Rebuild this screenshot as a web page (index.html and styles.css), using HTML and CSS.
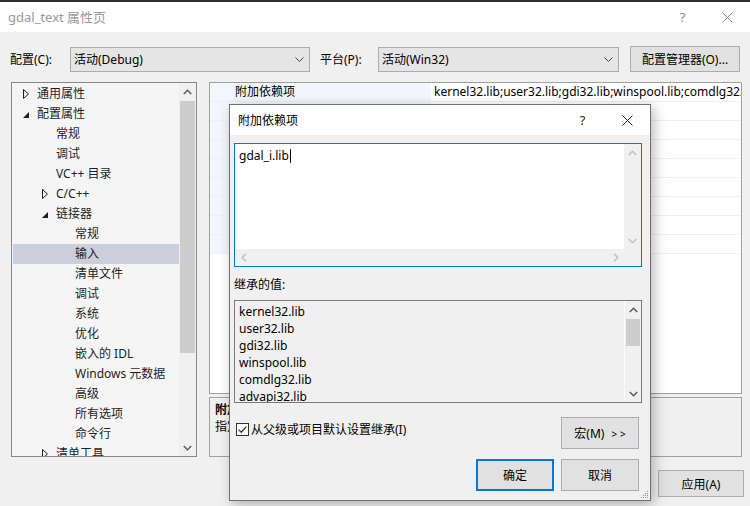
FILE: index.html
```html
<!DOCTYPE html>
<html lang="zh-CN">
<head>
  <meta charset="UTF-8">
  <title>gdal_text 属性页</title>
  <link rel="stylesheet" href="styles.css">
</head>
<body>
  <div class="topstrip"></div>
  <div class="titlebar">
    <span class="title">gdal_text 属性页</span>
    <span class="cap-btn">?</span>
    <span class="cap-btn"><svg width="11" height="11" viewBox="0 0 11 11"><path d="M0.5 0.5 L10.5 10.5 M10.5 0.5 L0.5 10.5" stroke="#8a8a8a" stroke-width="1"/></svg></span>
  </div>

  <div class="toolbar">
    <span class="tool-label">配置(C):</span>
    <div class="combo combo-config"><span>活动(Debug)</span><svg width="9" height="5" viewBox="0 0 9 5"><path d="M0.5 0.5 L4.5 4.5 L8.5 0.5" fill="none" stroke="#444"/></svg></div>
    <span class="tool-label label-platform">平台(P):</span>
    <div class="combo combo-platform"><span>活动(Win32)</span><svg width="9" height="5" viewBox="0 0 9 5"><path d="M0.5 0.5 L4.5 4.5 L8.5 0.5" fill="none" stroke="#444"/></svg></div>
    <button class="btn btn-manager">配置管理器(O)...</button>
  </div>

  <div class="main">
    <div class="tree">
      <div class="tree-list">
        <div class="node lv0"><span class="arrow"><svg width="6" height="10" viewBox="0 0 6 10"><path d="M0.5 0.5 L5.5 5 L0.5 9.5 Z" fill="none" stroke="#1e1e1e"/></svg></span>通用属性</div>
        <div class="node lv0"><span class="arrow"><svg width="6" height="10" viewBox="0 0 6 10"><path d="M6 3 L6 9 L0 9 Z" fill="#1e1e1e"/></svg></span>配置属性</div>
        <div class="node lv1"><span class="arrow"></span>常规</div>
        <div class="node lv1"><span class="arrow"></span>调试</div>
        <div class="node lv1"><span class="arrow"></span>VC++ 目录</div>
        <div class="node lv1"><span class="arrow"><svg width="6" height="10" viewBox="0 0 6 10"><path d="M0.5 0.5 L5.5 5 L0.5 9.5 Z" fill="none" stroke="#1e1e1e"/></svg></span>C/C++</div>
        <div class="node lv1"><span class="arrow"><svg width="6" height="10" viewBox="0 0 6 10"><path d="M6 3 L6 9 L0 9 Z" fill="#1e1e1e"/></svg></span>链接器</div>
        <div class="node lv2"><span class="arrow"></span>常规</div>
        <div class="node lv2 selected"><span class="arrow"></span>输入</div>
        <div class="node lv2"><span class="arrow"></span>清单文件</div>
        <div class="node lv2"><span class="arrow"></span>调试</div>
        <div class="node lv2"><span class="arrow"></span>系统</div>
        <div class="node lv2"><span class="arrow"></span>优化</div>
        <div class="node lv2"><span class="arrow"></span>嵌入的 IDL</div>
        <div class="node lv2"><span class="arrow"></span>Windows 元数据</div>
        <div class="node lv2"><span class="arrow"></span>高级</div>
        <div class="node lv2"><span class="arrow"></span>所有选项</div>
        <div class="node lv2"><span class="arrow"></span>命令行</div>
        <div class="node lv1"><span class="arrow"><svg width="6" height="10" viewBox="0 0 6 10"><path d="M0.5 0.5 L5.5 5 L0.5 9.5 Z" fill="none" stroke="#1e1e1e"/></svg></span>清单工具</div>
      </div>
      <div class="vscroll">
        <div class="sb-arrow"><svg width="9" height="6" viewBox="0 0 9 6"><path d="M0.8 5 L4.5 1.3 L8.2 5" fill="none" stroke="#606060" stroke-width="1.6"/></svg></div>
        <div class="sb-thumb tree-thumb"></div>
        <div class="sb-fill"></div>
        <div class="sb-arrow"><svg width="9" height="6" viewBox="0 0 9 6"><path d="M0.8 1 L4.5 4.7 L8.2 1" fill="none" stroke="#606060" stroke-width="1.6"/></svg></div>
      </div>
    </div>

    <div class="props">
      <div class="grid">
        <div class="row"><div class="name">附加依赖项</div><div class="value">kernel32.lib;user32.lib;gdi32.lib;winspool.lib;comdlg32.lib;advapi32.lib;shell32.lib;ole32.lib</div></div>
        <div class="row"><div class="name">忽略所有默认库</div><div class="value"></div></div>
        <div class="row"><div class="name">忽略特定默认库</div><div class="value"></div></div>
        <div class="row"><div class="name">模块定义文件</div><div class="value"></div></div>
        <div class="row"><div class="name">将模块添加到程序集</div><div class="value"></div></div>
        <div class="row"><div class="name">嵌入托管资源文件</div><div class="value"></div></div>
        <div class="row"><div class="name">强制符号引用</div><div class="value"></div></div>
        <div class="row"><div class="name">延迟加载的 DLL</div><div class="value"></div></div>
        <div class="row"><div class="name">程序集链接资源</div><div class="value"></div></div>
      </div>
      <div class="desc">
        <div class="desc-title">附加依赖项</div>
        <div class="desc-text">指定要添加到链接命令行的附加项。[例如 kernel32.lib]</div>
      </div>
    </div>
  </div>

  <div class="footer">
    <button class="btn btn-apply">应用(A)</button>
  </div>

  <div class="dialog">
    <div class="dlg-title">
      <span class="title dlg-name">附加依赖项</span>
      <span class="cap-btn dlg-cap">?</span>
      <span class="cap-btn dlg-cap"><svg width="11" height="11" viewBox="0 0 11 11"><path d="M0.5 0.5 L10.5 10.5 M10.5 0.5 L0.5 10.5" stroke="#222" stroke-width="1"/></svg></span>
    </div>
    <div class="dlg-body">
      <div class="edit">
        <div class="edit-text">gdal_i.lib<span class="caret"></span></div>
        <div class="vscroll edit-v">
          <div class="sb-arrow"><svg width="9" height="6" viewBox="0 0 9 6"><path d="M0.8 5 L4.5 1.3 L8.2 5" fill="none" stroke="#c2c2c2" stroke-width="1.6"/></svg></div>
          <div class="sb-fill"></div>
          <div class="sb-arrow"><svg width="9" height="6" viewBox="0 0 9 6"><path d="M0.8 1 L4.5 4.7 L8.2 1" fill="none" stroke="#c2c2c2" stroke-width="1.6"/></svg></div>
        </div>
        <div class="hscroll">
          <div class="sb-arrow-h"><svg width="6" height="9" viewBox="0 0 6 9"><path d="M5 0.8 L1.3 4.5 L5 8.2" fill="none" stroke="#c2c2c2" stroke-width="1.6"/></svg></div>
          <div class="sb-fill"></div>
          <div class="sb-arrow-h"><svg width="6" height="9" viewBox="0 0 6 9"><path d="M1 0.8 L4.7 4.5 L1 8.2" fill="none" stroke="#c2c2c2" stroke-width="1.6"/></svg></div>
        </div>
        <div class="corner"></div>
      </div>

      <div class="inherit-label">继承的值:</div>
      <div class="inherit">
        <div class="inherit-list">
          <div>kernel32.lib</div>
          <div>user32.lib</div>
          <div>gdi32.lib</div>
          <div>winspool.lib</div>
          <div>comdlg32.lib</div>
          <div>advapi32.lib</div>
          <div>shell32.lib</div>
        </div>
        <div class="vscroll inherit-v">
          <div class="sb-arrow"><svg width="9" height="6" viewBox="0 0 9 6"><path d="M0.8 5 L4.5 1.3 L8.2 5" fill="none" stroke="#606060" stroke-width="1.6"/></svg></div>
          <div class="sb-thumb list-thumb"></div>
          <div class="sb-fill"></div>
          <div class="sb-arrow"><svg width="9" height="6" viewBox="0 0 9 6"><path d="M0.8 1 L4.5 4.7 L8.2 1" fill="none" stroke="#606060" stroke-width="1.6"/></svg></div>
        </div>
      </div>

      <div class="dlg-row">
        <label class="check">
          <svg width="13" height="13" viewBox="0 0 13 13"><rect x="0.5" y="0.5" width="12" height="12" fill="#fff" stroke="#333"/><path d="M2.6 6.6 L5.2 9.2 L10.4 3.6" fill="none" stroke="#333" stroke-width="1.3"/></svg>
          <span>从父级或项目默认设置继承(I)</span>
        </label>
        <button class="btn dlg-btn">宏(M) <span class="chev">&gt; &gt;</span></button>
      </div>
      <div class="dlg-row dlg-actions">
        <button class="btn dlg-btn btn-default">确定</button>
        <button class="btn dlg-btn">取消</button>
      </div>
    </div>
    <svg class="grip" width="8" height="8" viewBox="0 0 8 8">
      <rect x="6" y="0" width="1" height="1" fill="#999"/>
      <rect x="4" y="2" width="1" height="1" fill="#999"/><rect x="6" y="2" width="1" height="1" fill="#999"/>
      <rect x="2" y="4" width="1" height="1" fill="#999"/><rect x="4" y="4" width="1" height="1" fill="#999"/><rect x="6" y="4" width="1" height="1" fill="#999"/>
      <rect x="0" y="6" width="1" height="1" fill="#999"/><rect x="2" y="6" width="1" height="1" fill="#999"/><rect x="4" y="6" width="1" height="1" fill="#999"/><rect x="6" y="6" width="1" height="1" fill="#999"/>
    </svg>
  </div>
</body>
</html>
```

FILE: styles.css
```css
* {
  box-sizing: border-box;
}
body {
  margin: 0;
  width: 750px;
  height: 506px;
  overflow: hidden;
  position: relative;
  background-color: #f0f0f0;
  color: #000;
  font-family: "Noto Sans", "Noto Sans CJK SC", sans-serif;
  font-size: 12px;
  line-height: 17px;
}
button {
  font-family: inherit;
  font-size: 12px;
  color: #000;
}
svg {
  display: block;
}

.topstrip {
  height: 2px;
  background-color: #2f2f2f;
}
.titlebar {
  height: 30px;
  background-color: #fff;
  display: flex;
  align-items: center;
}
.title {
  flex: 1;
  padding-left: 8px;
  color: #999;
  font-size: 13px;
}
.cap-btn {
  width: 45px;
  height: 30px;
  display: flex;
  align-items: center;
  justify-content: center;
  color: #8a8a8a;
  font-size: 13px;
}

/* toolbar */
.toolbar {
  display: flex;
  align-items: center;
  padding: 14px 0 10px 10px;
}
.tool-label {
  width: 60px;
}
.label-platform {
  width: 58px;
  margin-left: 10px;
}
.combo {
  height: 25px;
  background-color: #e5e5e5;
  border: 1px solid #acacac;
  display: flex;
  align-items: center;
  justify-content: space-between;
  padding: 0 5px 0 3px;
}
.combo-config {
  width: 240px;
}
.combo-platform {
  width: 241px;
}
.btn {
  background-color: #e1e1e1;
  border: 1px solid #adadad;
  padding: 0;
}
.btn-manager {
  width: 110px;
  height: 26px;
  margin-left: 11px;
}

/* main area */
.main {
  display: flex;
  gap: 12px;
  padding-left: 11px;
  height: 375px;
}
.tree {
  width: 186px;
  border: 1px solid #828790;
  background-color: #f5f5f5;
  display: flex;
  overflow: hidden;
}
.tree-list {
  flex: 1;
  padding: 1px 0 0 1px;
  color: #1e1e1e;
  overflow: hidden;
}
.node {
  height: 20px;
  line-height: 20px;
  display: flex;
  align-items: center;
  white-space: nowrap;
}
.node.selected {
  background-color: #cccedb;
}
.lv0 { padding-left: 10px; }
.lv1 { padding-left: 29px; }
.lv2 { padding-left: 48px; }
.arrow {
  width: 14px;
  flex-shrink: 0;
}

.vscroll {
  width: 17px;
  flex-shrink: 0;
  display: flex;
  flex-direction: column;
  background-color: #f0f0f0;
}
.sb-arrow {
  height: 17px;
  display: flex;
  align-items: center;
  justify-content: center;
}
.sb-fill {
  flex: 1;
}
.sb-thumb {
  margin: 1px 1px 0;
  background-color: #cdcdcd;
}
.tree-thumb {
  height: 252px;
}

.props {
  width: 533px;
  display: flex;
  flex-direction: column;
  gap: 3px;
}
.grid {
  height: 313px;
  border: 1px solid #a0a0a0;
  background-color: #fff;
  overflow: hidden;
}
.row {
  height: 19px;
  line-height: 18px;
  display: flex;
  border-bottom: 1px solid #f0f0f3;
  white-space: nowrap;
}
.row .name {
  width: 221px;
  flex-shrink: 0;
  padding-left: 25px;
  background-color: #f3f6fb;
  overflow: hidden;
}
.row .value {
  flex: 1;
  padding-left: 3px;
  overflow: hidden;
}
.desc {
  height: 60px;
  border: 1px solid #a0a0a0;
  padding: 3px 5px;
  overflow: hidden;
  white-space: nowrap;
}
.desc-title {
  font-weight: bold;
}

.footer {
  display: flex;
  justify-content: flex-end;
  padding: 13px 6px 0 0;
}
.btn-apply {
  width: 86px;
  height: 27px;
}

/* modal dialog */
.dialog {
  position: absolute;
  left: 229px;
  top: 104px;
  width: 422px;
  height: 397px;
  border: 1px solid #6f6f6f;
  background-color: #f0f0f0;
  box-shadow: 3px 3px 12px rgba(0, 0, 0, 0.28);
}
.dlg-title {
  height: 30px;
  background-color: #fff;
  display: flex;
  align-items: center;
}
.dlg-name {
  color: #000;
  font-size: 12px;
}
.dlg-cap {
  color: #222;
}
.dlg-body {
  padding: 8px 8px 0 4px;
}
.edit {
  height: 124px;
  border: 1px solid #0078d7;
  display: grid;
  grid-template-columns: 1fr 17px;
  grid-template-rows: 1fr 17px;
}
.edit-text {
  background-color: #fff;
  padding: 3px 0 0 4px;
}
.caret {
  display: inline-block;
  width: 1px;
  height: 14px;
  margin-left: 1px;
  vertical-align: -3px;
  background-color: #000;
}
.edit-v {
  background-color: #f0f0f0;
}
.hscroll {
  display: flex;
  background-color: #f0f0f0;
}
.sb-arrow-h {
  width: 17px;
  display: flex;
  align-items: center;
  justify-content: center;
}
.corner {
  background-color: #f0f0f0;
}
.inherit-label {
  margin-top: 8px;
  line-height: 20px;
}
.inherit {
  margin-top: 5px;
  height: 103px;
  border: 1px solid #7a7a7a;
  display: flex;
  overflow: hidden;
}
.inherit-list {
  flex: 1;
  padding: 2px 0 0 4px;
  overflow: hidden;
}
.inherit-v {
  border-left: 1px solid #fafafa;
}
.list-thumb {
  height: 27px;
}
.dlg-row {
  display: flex;
  justify-content: space-between;
  align-items: flex-start;
  margin-top: 14px;
  padding-right: 3px;
}
.dlg-actions {
  justify-content: flex-end;
  gap: 7px;
  margin-top: 10px;
}
.check {
  display: flex;
  align-items: center;
  gap: 2px;
  padding: 4px 0 0 2px;
}
.dlg-btn {
  width: 78px;
  height: 32px;
}
.chev {
  font-size: 10px;
  margin-left: 4px;
}
.btn-default {
  border: 2px solid #0078d7;
}
.grip {
  position: absolute;
  right: 1px;
  bottom: 1px;
}
```
